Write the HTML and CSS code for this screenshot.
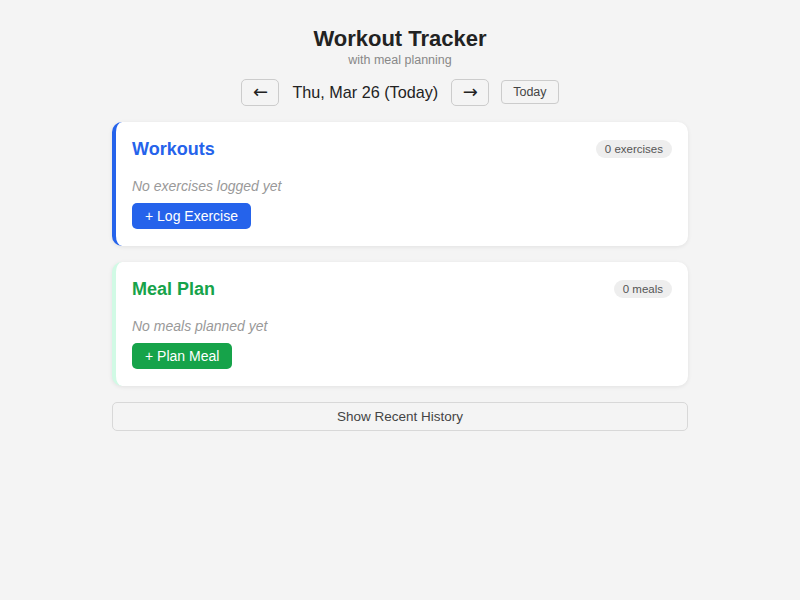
FILE: index.html
```html
<!DOCTYPE html>
<html>
<head>
<meta charset="utf-8">
<link rel="stylesheet" href="styles.css">
</head>
<body>
<div class="app">
  <header class="header">
    <h1 class="title">Workout Tracker</h1>
    <div class="subtitle">with meal planning</div>
  </header>
  <nav class="date-nav">
    <button class="arrow-btn">←</button>
    <span class="date-label">Thu, Mar 26 (Today)</span>
    <button class="arrow-btn">→</button>
    <button class="today-btn">Today</button>
  </nav>
  <section class="card card-workouts">
    <div class="card-head">
      <h2 class="card-title">Workouts</h2>
      <span class="badge">0 exercises</span>
    </div>
    <p class="empty">No exercises logged yet</p>
    <button class="action-btn">+ Log Exercise</button>
  </section>
  <section class="card card-meals">
    <div class="card-head">
      <h2 class="card-title">Meal Plan</h2>
      <span class="badge">0 meals</span>
    </div>
    <p class="empty">No meals planned yet</p>
    <button class="action-btn">+ Plan Meal</button>
  </section>
  <button class="history-btn">Show Recent History</button>
</div>
</body>
</html>
```

FILE: styles.css
```css
* { box-sizing: border-box; }
html, body { margin: 0; padding: 0; }
body {
  background: #f4f4f4;
  font-family: "Liberation Sans", Arial, sans-serif;
  color: #222;
}
.app {
  width: 576px;
  margin: 0 auto;
  padding-top: 25px;
  display: flex;
  flex-direction: column;
}
.header { text-align: center; }
.title {
  margin: 0;
  font-size: 22px;
  font-weight: 700;
  line-height: 28px;
  color: #222;
}
.subtitle {
  font-size: 12.5px;
  color: #888;
  line-height: 14px;
}
.date-nav {
  display: flex;
  justify-content: center;
  align-items: center;
  margin-top: 11px;
  margin-bottom: 16px;
  height: 28px;
}
.arrow-btn {
  width: 38px;
  height: 27px;
  border: 1px solid #ccc;
  border-radius: 5px;
  background: #f4f4f4;
  font-family: "DejaVu Sans", sans-serif;
  font-size: 18px;
  color: #222;
  padding: 0;
  line-height: 1;
}
.date-label {
  font-size: 16.2px;
  margin: 0 13px;
  color: #222;
}
.today-btn {
  margin-left: 12px;
  height: 24px;
  padding: 0 11px;
  border: 1px solid #ccc;
  border-radius: 4px;
  background: #f4f4f4;
  font-family: "Liberation Sans", Arial, sans-serif;
  font-size: 12.5px;
  color: #444;
}
.card {
  background: #fff;
  border-radius: 10px;
  border-left: 4px solid #2563eb;
  padding: 16px 16px 17px 16px;
  box-shadow: 0 1px 4px rgba(0,0,0,0.08);
  margin-bottom: 16px;
}
.card-meals { border-left-color: #d1fae5; }
.card-head {
  display: flex;
  justify-content: space-between;
  align-items: center;
  margin-bottom: 18px;
}
.card-title {
  margin: 0;
  font-size: 18px;
  font-weight: 700;
  line-height: 22px;
}
.card-workouts .card-title { color: #2563eb; }
.card-meals .card-title { color: #16a34a; }
.badge {
  background: #eeeeee;
  border-radius: 9px;
  font-size: 11.5px;
  color: #555;
  padding: 2px 9px;
  line-height: 14px;
}
.empty {
  margin: 0 0 8px;
  font-size: 14px;
  font-style: italic;
  color: #999;
  line-height: 17px;
}
.action-btn {
  height: 26px;
  border: none;
  border-radius: 5px;
  padding: 0 13px;
  font-family: "Liberation Sans", Arial, sans-serif;
  font-size: 14px;
  font-weight: 400;
  color: #fff;
  background: #2563eb;
}
.card-meals .action-btn { background: #16a34a; }
.history-btn {
  width: 100%;
  height: 29px;
  border: 1px solid #d8d8d8;
  border-radius: 5px;
  background: #f4f4f4;
  font-family: "Liberation Sans", Arial, sans-serif;
  font-size: 13.5px;
  color: #444;
}
```
